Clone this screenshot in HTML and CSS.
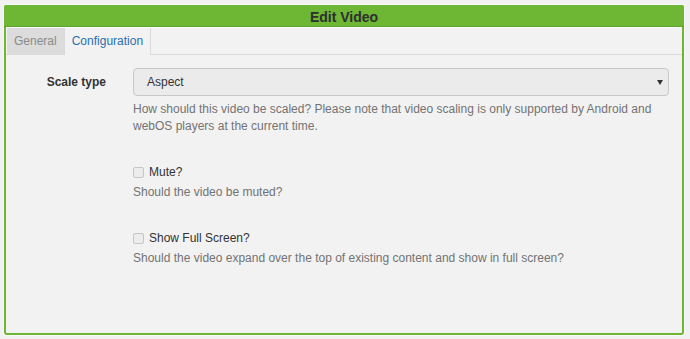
FILE: index.html
```html
<!DOCTYPE html>
<html lang="en">
<head>
    <meta charset="UTF-8">
    <title>Edit Video</title>
    <link rel="stylesheet" href="styles.css">
</head>
<body>
    <div class="panel">
        <div class="panel-header">Edit Video</div>
        <ul class="tabs">
            <li class="tab">General</li>
            <li class="tab active">Configuration</li>
        </ul>
        <form class="form">
            <div class="form-row">
                <label class="form-label">Scale type</label>
                <div class="form-control-wrap">
                    <div class="select">
                        <span>Aspect</span>
                        <span class="caret"></span>
                    </div>
                    <p class="help">How should this video be scaled? Please note that video scaling is only supported by Android and webOS players at the current time.</p>
                </div>
            </div>
            <div class="form-row check-row">
                <div></div>
                <div class="form-control-wrap">
                    <div class="check"><span class="box"></span>Mute?</div>
                    <p class="help">Should the video be muted?</p>
                </div>
            </div>
            <div class="form-row check-row">
                <div></div>
                <div class="form-control-wrap">
                    <div class="check"><span class="box"></span>Show Full Screen?</div>
                    <p class="help">Should the video expand over the top of existing content and show in full screen?</p>
                </div>
            </div>
        </form>
    </div>
</body>
</html>
```

FILE: styles.css
```css
body {
    margin: 0;
    padding: 5px 6px 4px 4px;
    background-color: #f1f1f1;
    font-family: "Liberation Sans", Arial, sans-serif;
    font-size: 12px;
    color: #333;
}

.panel {
    height: 328px;
    border: 2px solid #6cb633;
    border-top: none;
    border-radius: 3px;
    background-color: #f2f2f2;
    box-shadow: 0 0 0 1px #fafafa;
    display: flex;
    flex-direction: column;
}

.panel-header {
    background-color: #6db735;
    border-bottom: 1px solid #5ca52a;
    height: 20px;
    line-height: 22px;
    text-align: center;
    font-weight: bold;
    font-size: 14px;
    color: #2f2f2f;
    border-radius: 2px 2px 0 0;
    margin: 0 -2px;
    padding: 1px 0 0;
}

.tabs {
    list-style: none;
    margin: 0;
    padding: 0 0 0 1px;
    border-top: 1px solid #fff;
    border-bottom: 1px solid #dadada;
    display: flex;
    height: 26px;
}

.tab {
    padding: 0 7px;
    line-height: 26px;
    color: #8a8a8a;
    background-color: #dcdcdc;
}

.tab.active {
    color: #2a6fb0;
    background-color: #f2f2f2;
    border-left: 1px solid #dadada;
    border-right: 1px solid #dadada;
    margin-bottom: -1px;
    height: 27px;
}

.form {
    padding: 13px 13px 0 0;
}

.form-row {
    display: grid;
    grid-template-columns: 100px 1fr;
    column-gap: 27px;
}

.form-label {
    text-align: right;
    font-weight: bold;
    line-height: 28px;
}

.select {
    height: 26px;
    border: 1px solid #c8c8c8;
    border-radius: 4px;
    background-color: #ebebeb;
    display: flex;
    align-items: center;
    justify-content: space-between;
    padding: 0 5px 0 13px;
}

.caret {
    width: 0;
    height: 0;
    border-left: 3px solid transparent;
    border-right: 3px solid transparent;
    border-top: 5px solid #333;
}

.help {
    margin: 5px 0 0;
    line-height: 17px;
    color: #737373;
}

.check-row {
    margin-top: 28px;
}

.check-row + .check-row {
    margin-top: 28px;
}

.check {
    display: flex;
    align-items: center;
    line-height: 18px;
}

.box {
    width: 9px;
    height: 9px;
    border: 1px solid #c6c6c6;
    border-radius: 2px;
    background-color: #ececec;
    margin-right: 5px;
}

.check + .help {
    margin-top: 3px;
}
```
